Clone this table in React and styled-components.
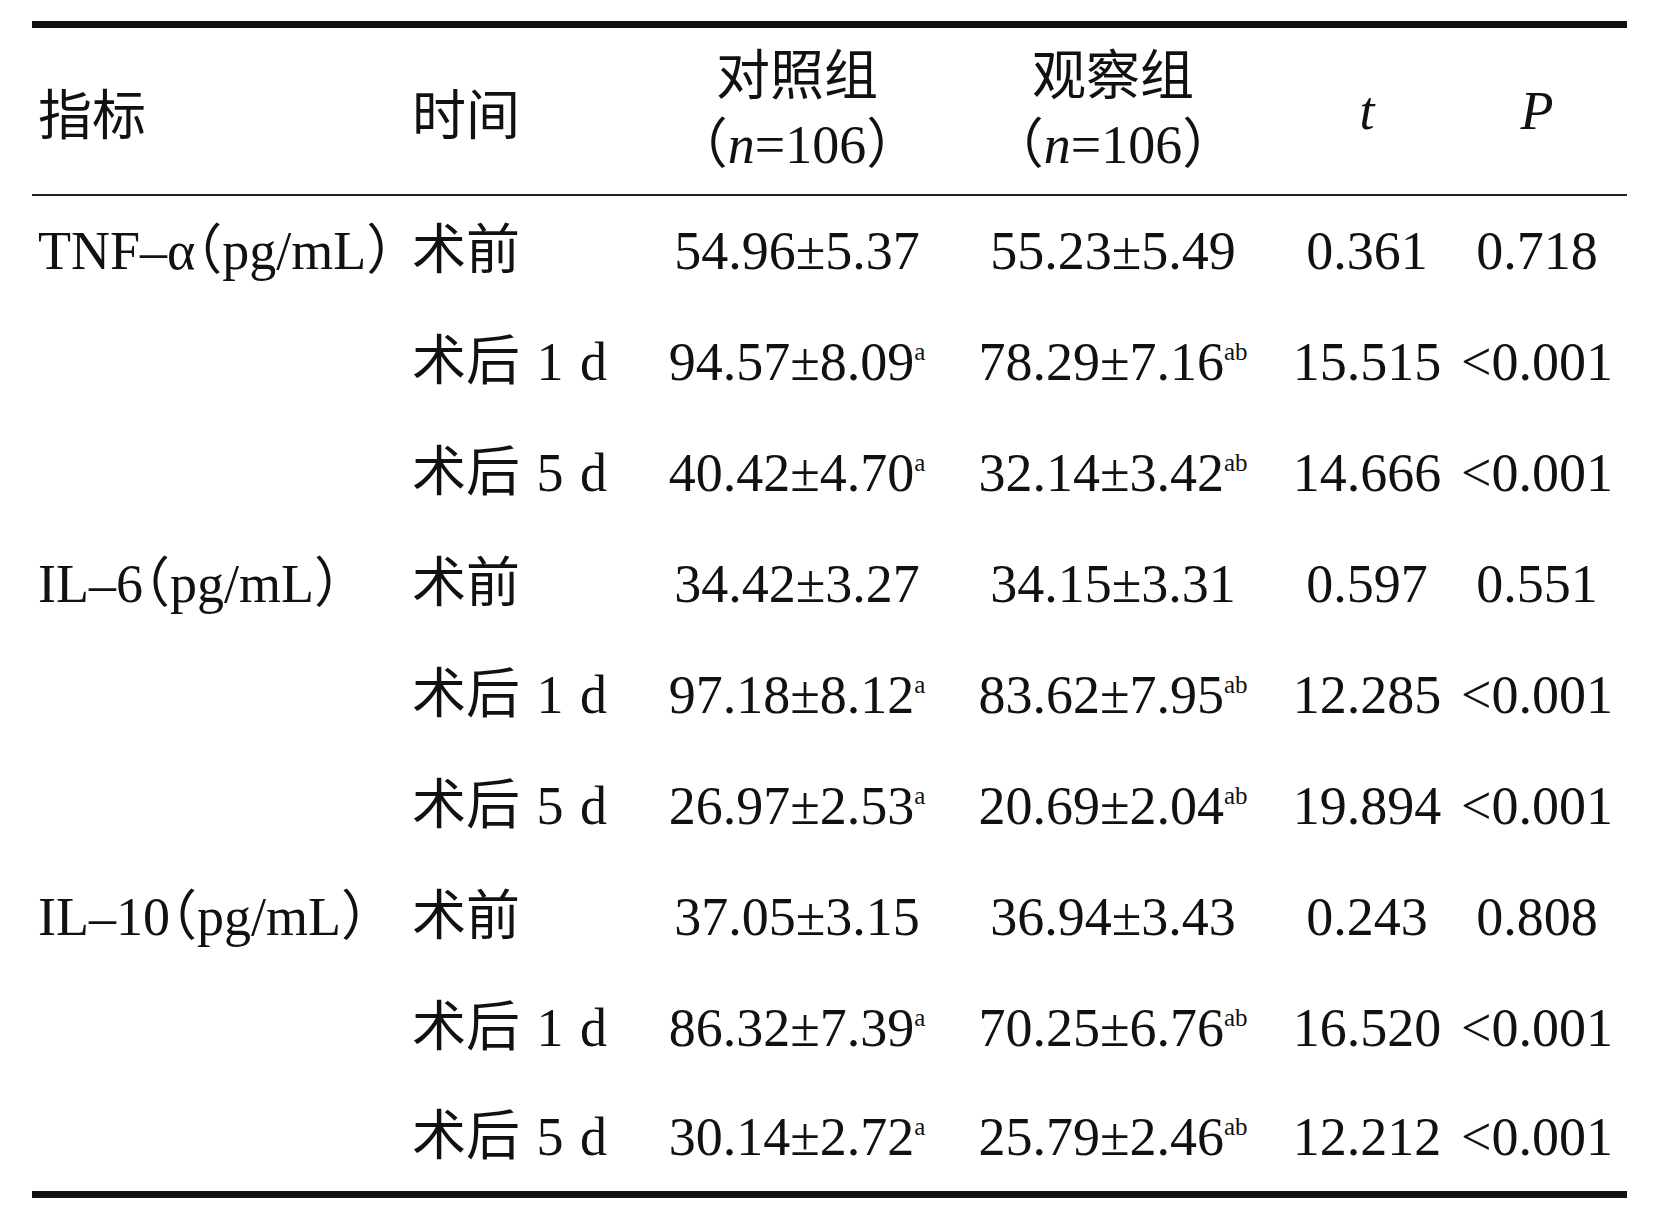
import React from "react";
import styled, { createGlobalStyle } from "styled-components";

const rows = [
	{ name: "TNF–α", time: "术前", ctrl: "54.96±5.37", obs: "55.23±5.49", t: "0.361", p: "0.718" },
	{ time: "术后 1 d", ctrl: "94.57±8.09", ctrlSup: "a", obs: "78.29±7.16", obsSup: "ab", t: "15.515", p: "<0.001" },
	{ time: "术后 5 d", ctrl: "40.42±4.70", ctrlSup: "a", obs: "32.14±3.42", obsSup: "ab", t: "14.666", p: "<0.001" },
	{ name: "IL–6", time: "术前", ctrl: "34.42±3.27", obs: "34.15±3.31", t: "0.597", p: "0.551" },
	{ time: "术后 1 d", ctrl: "97.18±8.12", ctrlSup: "a", obs: "83.62±7.95", obsSup: "ab", t: "12.285", p: "<0.001" },
	{ time: "术后 5 d", ctrl: "26.97±2.53", ctrlSup: "a", obs: "20.69±2.04", obsSup: "ab", t: "19.894", p: "<0.001" },
	{ name: "IL–10", time: "术前", ctrl: "37.05±3.15", obs: "36.94±3.43", t: "0.243", p: "0.808" },
	{ time: "术后 1 d", ctrl: "86.32±7.39", ctrlSup: "a", obs: "70.25±6.76", obsSup: "ab", t: "16.520", p: "<0.001" },
	{ time: "术后 5 d", ctrl: "30.14±2.72", ctrlSup: "a", obs: "25.79±2.46", obsSup: "ab", t: "12.212", p: "<0.001" },
];

function App() {
	return (
		<>
			<GlobalStyle />
			<Table>
				<HeaderRow>
					<HeadCell>指标</HeadCell>
					<HeadCell $time>时间</HeadCell>
					<HeadCell $center $stack>
						<div>对照组</div>
						<div>（<I>n</I>=106）</div>
					</HeadCell>
					<HeadCell $center $stack>
						<div>观察组</div>
						<div>（<I>n</I>=106）</div>
					</HeadCell>
					<HeadCell $center><I>t</I></HeadCell>
					<HeadCell $center><I>P</I></HeadCell>
				</HeaderRow>

				{rows.map((r, i) => (
					<Row key={i}>
						<Cell>{r.name && <>{r.name}（pg/mL）</>}</Cell>
						<Cell $time>{r.time}</Cell>
						<Cell $center>
							{r.ctrl}
							{r.ctrlSup && <Sup>{r.ctrlSup}</Sup>}
						</Cell>
						<Cell $center>
							{r.obs}
							{r.obsSup && <Sup>{r.obsSup}</Sup>}
						</Cell>
						<Cell $center>{r.t}</Cell>
						<Cell $center>{r.p}</Cell>
					</Row>
				))}
			</Table>
		</>
	);
}

export default App;

const GlobalStyle = createGlobalStyle`
body {
	margin: 0;
	background: #fff;
	color: #111;
	font-family: "Liberation Serif", "Noto Sans CJK SC", serif;
	font-feature-settings: "halt";
}
`;

// column widths: 指标 | 时间 | 对照组 | 观察组 | t | P
const cols = "380px 243px 284px 348px 160px 180px";

const Table = styled.div`
	width: 1595px;
	margin: 21px 0 0 32px;
	border-top: 7px solid #111;
	border-bottom: 7px solid #111;
	font-size: 54px;
`;

const HeaderRow = styled.div`
	display: grid;
	grid-template-columns: ${cols};
	height: 166px;
	border-bottom: 2px solid #222;
`;

const HeadCell = styled.div`
	display: flex;
	flex-direction: column;
	justify-content: center;
	align-items: ${(p) => (p.$center ? "center" : "flex-start")};
	padding-left: ${(p) => (p.$center || p.$time ? "0" : "6px")};
	line-height: ${(p) => (p.$stack ? "68px" : "normal")};
	white-space: nowrap;
`;

const Row = styled.div`
	display: grid;
	grid-template-columns: ${cols};
	height: 111px;
	line-height: 111px;

	&:last-child {
		height: 107px;
		line-height: 107px;
	}
`;

const Cell = styled.div`
	white-space: nowrap;
	text-align: ${(p) => (p.$center ? "center" : "left")};
	padding-left: ${(p) => (p.$center || p.$time ? "0" : "6px")};
	word-spacing: ${(p) => (p.$time ? "3px" : "0")};
`;

const I = styled.span`
	font-style: italic;
`;

const Sup = styled.span`
	font-size: 25px;
	line-height: 0;
	vertical-align: 20px;
`;
